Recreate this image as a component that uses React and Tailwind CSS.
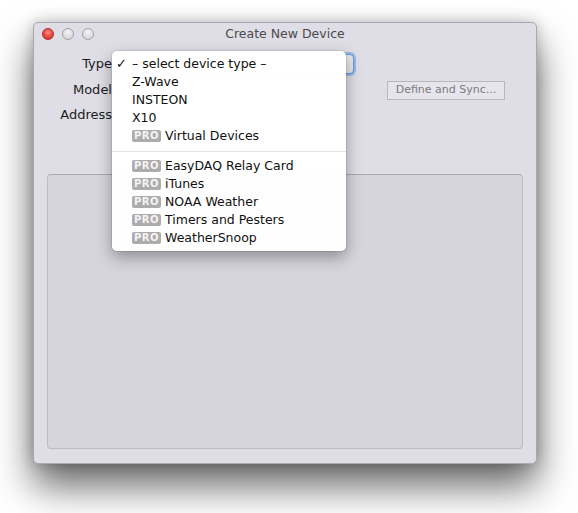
const basicItems = ["Z-Wave", "INSTEON", "X10"];
const proItems = ["EasyDAQ Relay Card", "iTunes", "NOAA Weather", "Timers and Pesters", "WeatherSnoop"];

function ProBadge() {
  return (
    <span className="mr-[4px] inline-flex h-[12px] w-[29px] items-center justify-center rounded-[2px] bg-[#acacac] text-[10px] font-bold leading-none tracking-[0.5px] text-[#f4f4f4]">
      PRO
    </span>
  );
}

function MenuRow({ children, checked }) {
  return (
    <div className="relative flex h-[18px] items-center pl-[20px] text-[12.5px] text-[#111]">
      {checked && <span className="absolute left-[4px] text-[13px] font-bold">✓</span>}
      {children}
    </div>
  );
}

export default function App() {
  return (
    <div
      className="relative h-[513px] w-[578px] overflow-hidden bg-white pl-[33px] pt-[22px]"
      style={{ fontFamily: '"DejaVu Sans", "Open Sans", sans-serif' }}
    >
      {/* Window */}
      <div className="relative flex h-[442px] w-[504px] flex-col rounded-[5px] border border-[#a9a8ae] bg-[#dfdee6] shadow-[0_22px_38px_rgba(0,0,0,0.6),0_0_14px_rgba(0,0,0,0.22)]">
        {/* Title bar */}
        <div className="relative flex h-[22px] items-center justify-center">
          <div className="absolute left-[8px] top-[5px] flex gap-[8px]">
            <span className="h-[12px] w-[12px] rounded-full border border-[#b52a26] bg-[radial-gradient(circle_at_50%_35%,#ff8a7f,#e0443c_60%,#c6302a)]" />
            <span className="h-[12px] w-[12px] rounded-full border border-[#a3a2a8] bg-[radial-gradient(circle_at_50%_35%,#f4f4f6,#cfced4)]" />
            <span className="h-[12px] w-[12px] rounded-full border border-[#a3a2a8] bg-[radial-gradient(circle_at_50%_35%,#f4f4f6,#cfced4)]" />
          </div>
          <span className="mt-[1px] text-[12.5px] text-[#4a4a4a]">Create New Device</span>
        </div>

        {/* Form */}
        <div className="flex flex-col px-[14px] pt-[9px]">
          <div className="flex h-[20px] items-center">
            <span className="w-[64px] text-right text-[13px] text-[#1c1c1c]">Type</span>
            <div className="ml-[6px] h-[20px] w-[236px] rounded-[4px] border border-[#5d9be0] bg-[#e8e8ec] shadow-[0_0_0_2px_rgba(110,160,230,0.6)]" />
          </div>
          <div className="mt-[6px] flex h-[20px] items-center">
            <span className="w-[64px] text-right text-[13px] text-[#1c1c1c]">Model</span>
            <div className="ml-[6px] h-[20px] w-[236px]" />
            <button className="ml-[33px] h-[19px] w-[118px] border border-[#b8b7bd] bg-[#e6e5eb] text-[11px] text-[#7b7a80]">
              Define and Sync...
            </button>
          </div>
          <div className="mt-[5px] flex h-[20px] items-center">
            <span className="w-[64px] text-right text-[13px] text-[#1c1c1c]">Address</span>
          </div>
        </div>

        {/* Content panel */}
        <div className="mx-[13px] mt-[49px] mb-[14px] flex-1 rounded-[4px] border border-[#bdbcc3] border-t-[#a9a8b0] bg-[#d6d5de]" />
      </div>

      {/* Popup menu */}
      <div className="absolute left-[112px] top-[51px] w-[234px] rounded-[5px] bg-white/[0.98] pt-[4px] pb-[4px] shadow-[0_6px_16px_rgba(0,0,0,0.35),0_0_0_1px_rgba(0,0,0,0.08)]">
        <MenuRow checked>– select device type –</MenuRow>
        {basicItems.map((item) => (
          <MenuRow key={item}>{item}</MenuRow>
        ))}
        <MenuRow>
          <ProBadge />
          Virtual Devices
        </MenuRow>
        <div className="mt-[6px] mb-[5px] h-px bg-[#e2e2e2]" />
        {proItems.map((item) => (
          <MenuRow key={item}>
            <ProBadge />
            {item}
          </MenuRow>
        ))}
      </div>
    </div>
  );
}
